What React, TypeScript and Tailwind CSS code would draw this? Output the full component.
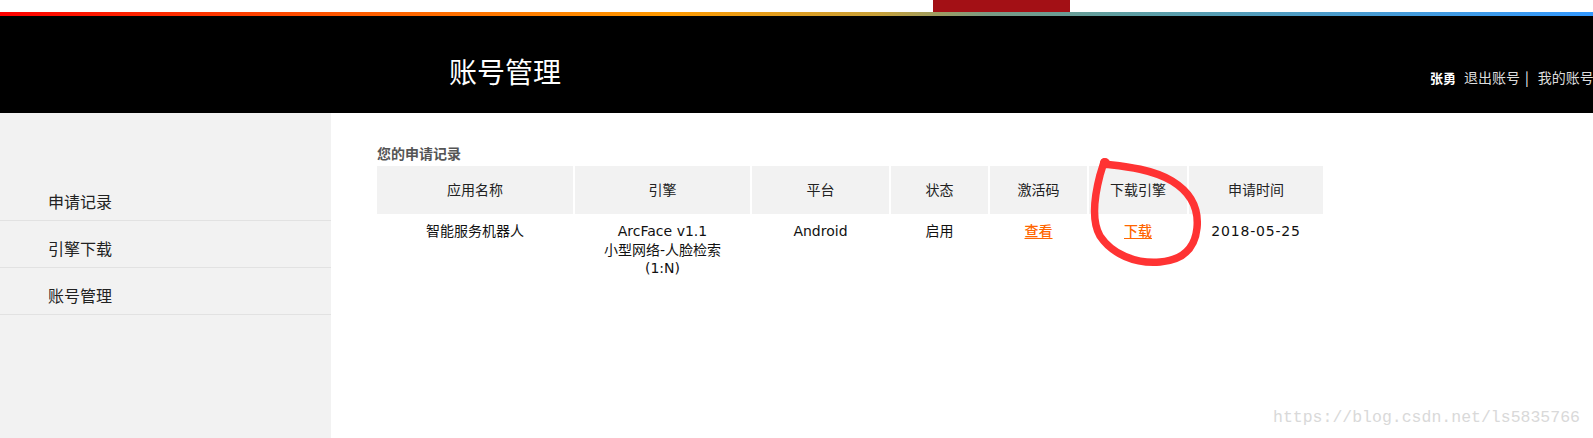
import React from "react";

const font = { fontFamily: '"DejaVu Sans", "Noto Sans CJK SC", sans-serif' };

const cols = "grid grid-cols-[196px_175px_137px_97px_97px_98px_134px] gap-x-[2px]";

export default function App() {
  const headers = ["应用名称", "引擎", "平台", "状态", "激活码", "下载引擎", "申请时间"];
  return (
    <div className="relative w-[1593px] h-[438px] overflow-hidden bg-white" style={font}>
      {/* top strip */}
      <div className="flex h-[12px]">
        <div className="w-[933px]" />
        <div className="w-[137px] bg-[#a31015]" />
      </div>
      <div className="h-[4px] bg-[linear-gradient(to_right,#ff0000_0%,#ff5a00_22%,#ff9a00_42%,#c8a038_55%,#7a9a84_62%,#5f9ea0_70%,#3399ff_100%)]" />
      {/* header */}
      <div className="flex h-[97px] bg-black whitespace-nowrap">
        <div className="w-[1430px] shrink-0 pl-[449px] pt-[38px]">
          <span className="text-[28px] leading-[34px] text-white" style={{ fontFamily: '"Noto Sans CJK SC", sans-serif' }}>
            账号管理
          </span>
        </div>
        <div className="flex items-baseline pt-[53px] text-[14px] leading-[16px]" style={{ fontFamily: '"Noto Sans CJK SC", sans-serif' }}>
          <span className="text-[13px] font-bold text-white">张勇</span>
          <span className="ml-[8px] text-[#dddddd]">退出账号</span>
          <span className="ml-[5px] text-white">|</span>
          <span className="ml-[9px] text-[#dddddd]">我的账号</span>
        </div>
      </div>
      {/* body */}
      <div className="flex h-[325px]">
        <div className="w-[331px] shrink-0 bg-[#f2f2f2] pt-[61px]" style={{ fontFamily: '"Noto Sans CJK SC", sans-serif' }}>
          {["申请记录", "引擎下载", "账号管理"].map((t) => (
            <div key={t} className="flex h-[47px] items-center border-b border-[#e2e2e2] pl-[48px] pt-[8px] text-[16px] text-[#222]">
              {t}
            </div>
          ))}
        </div>
        <div className="pl-[46px] pt-[31px]">
          <div className="mb-[4px] text-[14px] font-bold leading-[18px] text-[#555]" style={{ fontFamily: '"Noto Sans CJK SC", sans-serif' }}>
            您的申请记录
          </div>
          <div className={cols + " h-[48px]"}>
            {headers.map((h) => (
              <div key={h} className="flex items-center justify-center bg-[#f2f2f2] text-[14px] text-[#222]">
                {h}
              </div>
            ))}
          </div>
          <div className={cols + " pt-[8px] text-center text-[14px] leading-[18.5px] text-[#111]"}>
            <div>智能服务机器人</div>
            <div>
              <div>ArcFace v1.1</div>
              <div>小型网络-人脸检索</div>
              <div>(1:N)</div>
            </div>
            <div>Android</div>
            <div>启用</div>
            <div>
              <span className="font-medium text-[#ff6600] underline underline-offset-2">查看</span>
            </div>
            <div>
              <span className="font-medium text-[#ff6600] underline underline-offset-2">下载</span>
            </div>
            <div className="tracking-[0.8px]">2018-05-25</div>
          </div>
        </div>
      </div>
      {/* red hand-drawn circle */}
      <svg className="pointer-events-none absolute left-0 top-0" width="1593" height="438">
        <path
          d="M1104 164 C1120 166 1150 168 1172 181 C1190 192 1199 208 1197 228 C1195 248 1183 260 1160 262 C1135 264 1112 254 1100 236 C1092 222 1094 198 1100 175 L1104 162"
          fill="none"
          stroke="#ff3333"
          strokeWidth="7.5"
          strokeLinecap="round"
          strokeLinejoin="round"
        />
        <circle cx="1105" cy="163" r="5" fill="#ff3333" />
      </svg>
      {/* watermark */}
      <div
        className="absolute left-[1273px] top-[406px] whitespace-nowrap text-[16.5px] leading-[24px] text-[#d9d9d9]"
        style={{ fontFamily: '"Liberation Mono", monospace' }}
      >
        https://blog.csdn.net/ls5835766
      </div>
    </div>
  );
}
